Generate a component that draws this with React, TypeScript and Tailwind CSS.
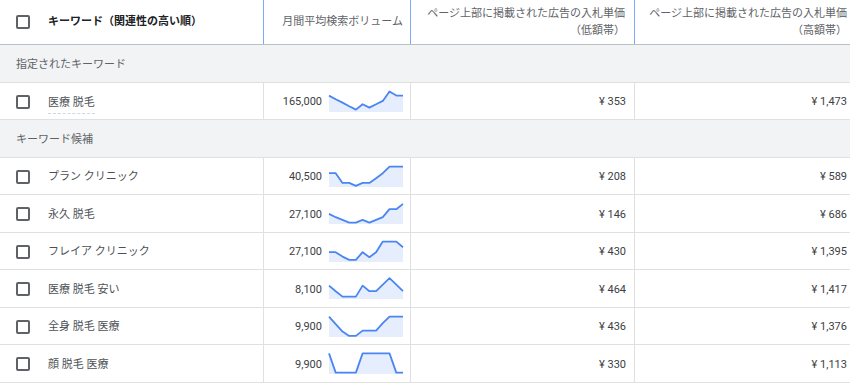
import React from 'react';

interface KeywordRow {
  keyword: string;
  volume: string;
  low: string;
  high: string;
  trend: number[];
  underline?: boolean;
}

const specified: KeywordRow[] = [
  {
    keyword: '医療 脱毛',
    volume: '165,000',
    low: '353',
    high: '1,473',
    trend: [5.6, 9.2, 12.6, 16.2, 19.6, 14.2, 17.6, 14.2, 10.9, 1.4, 5.6, 5.6],
    underline: true,
  },
];

const ideas: KeywordRow[] = [
  {
    keyword: 'プラン クリニック',
    volume: '40,500',
    low: '208',
    high: '589',
    trend: [8.2, 8.2, 17.9, 17.9, 20.9, 17.9, 17.9, 13.2, 8.2, 1.6, 1.6, 1.6],
  },
  {
    keyword: '永久 脱毛',
    volume: '27,100',
    low: '146',
    high: '686',
    trend: [11.9, 15.2, 17.9, 20.6, 20.6, 17.9, 20.6, 17.9, 15.2, 7.2, 7.2, 1.9],
  },
  {
    keyword: 'フレイア クリニック',
    volume: '27,100',
    low: '430',
    high: '1,395',
    trend: [12.2, 12.2, 16.6, 19.9, 19.9, 12.2, 17.2, 12.2, 1.6, 1.6, 1.6, 7.2],
  },
  {
    keyword: '医療 脱毛 安い',
    volume: '8,100',
    low: '464',
    high: '1,417',
    trend: [8.6, 14.2, 19.6, 19.6, 19.6, 8.6, 14.2, 14.2, 7.6, 1.2, 7.6, 14.2],
  },
  {
    keyword: '全身 脱毛 医療',
    volume: '9,900',
    low: '436',
    high: '1,376',
    trend: [1.6, 9.2, 16.6, 20.9, 20.9, 15.6, 15.6, 15.6, 8.2, 1.6, 1.6, 1.6],
  },
  {
    keyword: '顔 脱毛 医療',
    volume: '9,900',
    low: '330',
    high: '1,113',
    trend: [1.4, 20.6, 20.6, 20.6, 20.6, 1.4, 1.4, 1.4, 1.4, 1.4, 20.6, 20.6],
  },
];

const Checkbox = () => (
  <span className="block w-[14px] h-[14px] border-2 border-[#5f6368] rounded-[2px] shrink-0" />
);

// simple 12-month trend line with a filled area under it
const Sparkline = ({ data }: { data: number[] }) => {
  const step = 74 / (data.length - 1);
  const pts = data.map((y, i) => `${(i * step).toFixed(1)},${y}`);
  const line = 'M' + pts.join(' L');
  const area = `${line} L74,22 L0,22 Z`;
  return (
    <svg width="74" height="22" viewBox="0 0 74 22" className="shrink-0 overflow-visible">
      <path d={area} fill="#e6eefd" />
      <path d={line} fill="none" stroke="#4a86f2" strokeWidth="1.8" strokeLinejoin="round" />
    </svg>
  );
};

const GroupRow = ({ label }: { label: string }) => (
  <div className="h-[37.5px] flex items-center pl-4 pt-[3px] bg-[#f1f3f4] border-b border-[#e0e0e0] text-[#5f6368]">
    {label}
  </div>
);

const DataRow = ({ row }: { row: KeywordRow }) => (
  <div className="h-[37.5px] grid grid-cols-[263px_147px_224px_1fr] border-b border-[#e0e0e0] bg-white text-[#3c4043]">
    <div className="flex items-center pl-4 pt-[2px] gap-[18px] text-[#4d5156]">
      <Checkbox />
      <span
        className={
          row.underline ? 'border-b border-dashed border-[#d2d5d9] leading-[16px] pb-[2px] mt-[5px]' : 'mt-[1px]'
        }
      >
        {row.keyword}
      </span>
    </div>
    <div className="flex items-center justify-end gap-[7px] pr-[7px] border-l border-[#e0e0e0]">
      <span className="mt-[3px]">{row.volume}</span>
      <Sparkline data={row.trend} />
    </div>
    <div className="flex items-center justify-end pr-[8px] pt-[3px] border-l border-[#e0e0e0]">
      ¥ {row.low}
    </div>
    <div className="flex items-center justify-end pr-[3px] pt-[3px] border-l border-[#e0e0e0]">
      ¥ {row.high}
    </div>
  </div>
);

export default function App() {
  return (
    <div
      className="w-[850px] h-[384px] overflow-hidden bg-white text-[11px]"
      style={{ fontFamily: "Roboto, 'Noto Sans CJK JP', sans-serif" }}
    >
      {/* header */}
      <div className="h-[45px] grid grid-cols-[263px_147px_224px_1fr] border-b border-[#bdc1c6] text-[#5f6368]">
        <div className="flex items-center pl-4 gap-[18px]">
          <Checkbox />
          <span className="font-bold text-[#202124]">キーワード（関連性の高い順）</span>
        </div>
        <div className="flex items-center justify-end pr-[7px] border-l border-[#7eaaf5]">
          月間平均検索ボリューム
        </div>
        <div className="flex flex-col justify-center items-end pr-[9px] border-l border-[#7eaaf5] leading-[17px]">
          <span>ページ上部に掲載された広告の入札単価</span>
          <span>（低額帯）</span>
        </div>
        <div className="flex flex-col justify-center items-end pr-[3px] border-l border-[#7eaaf5] leading-[17px]">
          <span>ページ上部に掲載された広告の入札単価</span>
          <span>（高額帯）</span>
        </div>
      </div>

      <GroupRow label="指定されたキーワード" />
      {specified.map((r) => (
        <DataRow key={r.keyword} row={r} />
      ))}
      <GroupRow label="キーワード候補" />
      {ideas.map((r) => (
        <DataRow key={r.keyword} row={r} />
      ))}
    </div>
  );
}
